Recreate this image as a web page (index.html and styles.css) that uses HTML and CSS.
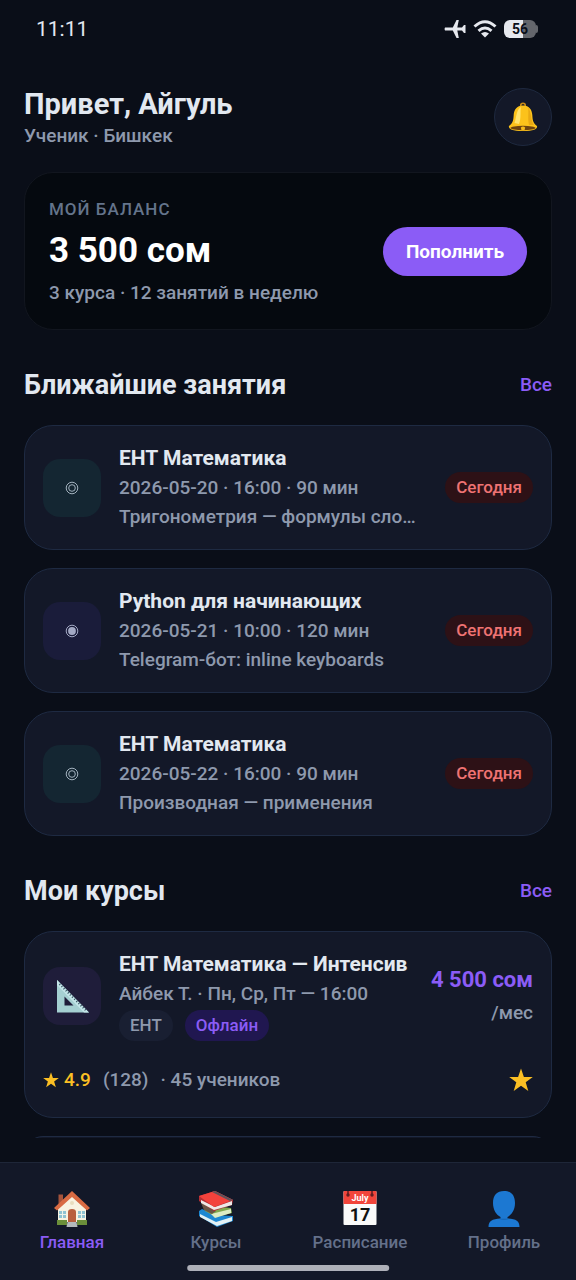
FILE: index.html
```html
<!DOCTYPE html>
<html lang="ru">
<head>
  <meta charset="UTF-8" />
  <meta name="viewport" content="width=device-width, initial-scale=1.0" />
  <title>Главная</title>
  <link rel="stylesheet" href="styles.css">
</head>
<body>
  <div class="status-bar">
    <span class="time">11:11</span>
    <div class="status-icons">
      <svg width="22" height="20" viewBox="0 0 22 20"><path d="M1 8.6Q0 10 1 11.4L8.800 11.600 12.500 19H14.800L13.300 11.600H18L20 14H21.500V6H20L18 8.400H13.300L14.800 1H12.500L8.800 8.400Z" fill="#e6e8ee"/></svg>
      <svg width="24" height="18" viewBox="0 0 24 18"><g fill="none" stroke="#e6e8ee" stroke-width="3"><path d="M1.500 6.500Q12-3 22.500 6.500"/><path d="M5.500 10.800Q12 5.200 18.500 10.800"/></g><path d="M8 13.500Q12 10.500 16 13.500L12 17.500Z" fill="#e6e8ee"/></svg>
      <div class="battery"><span>56</span></div>
    </div>
  </div>

  <main class="content">
    <header class="header">
      <div>
        <h1>Привет, Айгуль</h1>
        <p class="muted">Ученик · Бишкек</p>
      </div>
      <button class="bell-btn" aria-label="Уведомления">
        <svg width="32" height="32" viewBox="0 0 32 32">
          <circle cx="16" cy="4.500" r="2.300" fill="none" stroke="#c98a17" stroke-width="1.600"/>
          <path d="M16 4.500C22.500 4.500 25 9 25.300 14 25.600 20 26.500 22.500 30 25 31 28 26 30 16 30S1 28 2 25C5.500 22.500 6.400 20 6.700 14 7 9 9.500 4.500 16 4.500Z" fill="#fcc21b"/>
          <path d="M14 6C9 9 9.500 17 7.500 22L12 23C14.500 17 13 10 14 6Z" fill="#ffe36c"/>
          <path d="M21 6.500C25 11 23 19 27 24L22 24C20.500 17 22 11 21 6.500Z" fill="#e9a914"/>
          <ellipse cx="16" cy="27" rx="12.500" ry="2.200" fill="#6d4310"/>
          <path d="M13.800 26.500Q16 24.500 18.200 26.500L17.500 29.300H14.500Z" fill="#f5b91a"/>
        </svg>
      </button>
    </header>

    <section class="balance-card">
      <div class="balance-info">
        <p class="balance-label">МОЙ БАЛАНС</p>
        <p class="balance-sum">3 500 сом</p>
        <p class="muted">3 курса · 12 занятий в неделю</p>
      </div>
      <button class="btn-topup">Пополнить</button>
    </section>

    <section>
      <div class="section-head">
        <h2>Ближайшие занятия</h2>
        <a href="#">Все</a>
      </div>
      <div class="card-list">
        <article class="card lesson">
          <div class="card-icon icon-teal">
            <svg width="14" height="14" viewBox="0 0 14 14" fill="none" stroke="#a3b2bf"><circle cx="7" cy="7" r="5.800"/><circle cx="7" cy="7" r="3.300"/></svg>
          </div>
          <div class="card-text">
            <h3>ЕНТ Математика</h3>
            <p>2026-05-20 · 16:00 · 90 мин</p>
            <p>Тригонометрия — формулы сло…</p>
          </div>
          <span class="badge">Сегодня</span>
        </article>
        <article class="card lesson">
          <div class="card-icon icon-indigo">
            <svg width="14" height="14" viewBox="0 0 14 14"><circle cx="7" cy="7" r="5.800" fill="none" stroke="#a3a9c4"/><circle cx="7" cy="7" r="3.900" fill="#a3a9c4"/></svg>
          </div>
          <div class="card-text">
            <h3>Python для начинающих</h3>
            <p>2026-05-21 · 10:00 · 120 мин</p>
            <p>Telegram-бот: inline keyboards</p>
          </div>
          <span class="badge">Сегодня</span>
        </article>
        <article class="card lesson">
          <div class="card-icon icon-teal">
            <svg width="14" height="14" viewBox="0 0 14 14" fill="none" stroke="#a3b2bf"><circle cx="7" cy="7" r="5.800"/><circle cx="7" cy="7" r="3.300"/></svg>
          </div>
          <div class="card-text">
            <h3>ЕНТ Математика</h3>
            <p>2026-05-22 · 16:00 · 90 мин</p>
            <p>Производная — применения</p>
          </div>
          <span class="badge">Сегодня</span>
        </article>
      </div>
    </section>

    <section>
      <div class="section-head">
        <h2>Мои курсы</h2>
        <a href="#">Все</a>
      </div>
      <div class="card-list">
        <article class="card course">
          <div class="course-top">
            <div class="card-icon icon-violet">
              <svg width="36" height="36" viewBox="0 0 36 36">
                <path d="M3 2V34.500H35ZM10.500 18.500L19.500 27.500H10.500Z" fill="#a5d0d2" fill-rule="evenodd"/>
                <path d="M3 2L35 34.500H30L3 7Z" fill="#c3e5e8"/>
                <path d="M5.500 6L32 32.500" stroke="#34515f" stroke-width="2" stroke-dasharray="1 2"/>
              </svg>
            </div>
            <div class="card-text">
              <h3>ЕНТ Математика — Интенсив</h3>
              <p>Айбек Т. · Пн, Ср, Пт — 16:00</p>
              <div class="tags">
                <span class="tag">ЕНТ</span>
                <span class="tag tag-violet">Офлайн</span>
              </div>
            </div>
            <div class="price">
              <strong>4 500 сом</strong>
              <span>/мес</span>
            </div>
          </div>
          <div class="course-bottom">
            <span class="rating">
              <svg width="16" height="16" viewBox="0 0 24 24"><path d="M12 0.500L14.900 9H23.800L16.700 14.300 19.300 23 12 17.800 4.700 23 7.300 14.300 0.200 9H9.100Z" fill="#fbbf24"/></svg>
              4.9
            </span>
            <span>(128)</span>
            <span>· 45 учеников</span>
            <button class="fav-btn" aria-label="Избранное">
              <svg width="24" height="24" viewBox="0 0 24 24"><path d="M12 0.500L14.900 9H23.800L16.700 14.300 19.300 23 12 17.800 4.700 23 7.300 14.300 0.200 9H9.100Z" fill="#fbbf24"/></svg>
            </button>
          </div>
        </article>
        <article class="card course"></article>
      </div>
    </section>
  </main>

  <nav class="tab-bar">
    <a href="#" class="tab active">
      <svg width="36" height="36" viewBox="0 0 36 36">
        <path d="M4.500 3.500H9V14H4.500Z" fill="#a5533b"/>
        <path d="M4 17L18 4 32 17V31H4Z" fill="#f8f3e1"/>
        <path d="M0 17L18 0 36 17 33 19.500 18 6 3 19.500Z" fill="#d96b43"/>
        <path d="M5 20H12V27H5ZM24 20H31V27H24Z" fill="#8fc3d2"/>
        <path d="M8.500 20V27M5 23.500H12M27.500 20V27M24 23.500H31" stroke="#eef3ea"/>
        <path d="M14 33V21Q14 18 18 18T22 21V33Z" fill="#b9603f"/>
        <circle cx="18" cy="12" r="2" fill="#e8ddbd"/>
        <path d="M3 29H13V34H3ZM23 29H33V34H23Z" fill="#6b8f3a"/>
        <path d="M13.500 31H22.500L23.500 36H12.500Z" fill="#b4babd"/>
      </svg>
      <span>Главная</span>
    </a>
    <a href="#" class="tab">
      <svg width="36" height="36" viewBox="0 0 36 36">
        <path d="M1 20L4 18 18 24 35 25V30L19 36 1 25Z" fill="#1e88d2"/>
        <path d="M2 23L18 31 34 26V30L19 35 2 26Z" fill="#e4f1f4"/>
        <path d="M6 16L16 15 33 17 34 22 18 26 7 20Z" fill="#80a84e"/>
        <path d="M13 23L33 18V22L17 27Z" fill="#dcecc4"/>
        <path d="M3 12L12 15 18 20 14 23 6 19Z" fill="#6b5545"/>
        <path d="M1 5L17 0 35 9 34 14 16 20 1 10Z" fill="#b52e34"/>
        <path d="M3 9L17 16 34 10V14L16 19 3 12Z" fill="#eee9e7"/>
        <path d="M1 5L17 0 35 9 16 16Z" fill="#f3423c"/>
        <path d="M17 0L35 9 32 10 14 1Z" fill="#5f5158"/>
      </svg>
      <span>Курсы</span>
    </a>
    <a href="#" class="tab">
      <svg width="36" height="36" viewBox="0 0 36 36">
        <rect x="1.500" y="0" width="33" height="34" rx="1" fill="#fafafa"/>
        <path d="M1.500 1Q1.500 0 2.500 0H33.500Q34.500 0 34.500 1V13H1.500Z" fill="#f2453b"/>
        <path d="M6 0V4M30 0V4" stroke="#611d20" stroke-width="1.500"/>
        <circle cx="6" cy="4" r="1.700" fill="#611d20"/><circle cx="30" cy="4" r="1.700" fill="#611d20"/>
        <text x="18" y="9.500" text-anchor="middle" class="cal-month">July</text>
        <text x="18" y="30" text-anchor="middle" class="cal-day">17</text>
      </svg>
      <span>Расписание</span>
    </a>
    <a href="#" class="tab">
      <svg width="36" height="36" viewBox="0 0 36 36">
        <path d="M18 0C25 0 29 4 29 12 29 19 25.500 24 21.500 26V27.500C30 28 33.500 30 33.500 36H2.500C2.500 30 6 28 14.500 27.500V26C10.500 24 7 19 7 12 7 4 11 0 18 0Z" fill="#1c78d2"/>
        <path d="M12.500 27.700H23.500Q18 30 12.500 27.700Z" fill="#135fb0"/>
      </svg>
      <span>Профиль</span>
    </a>
    <div class="home-indicator"></div>
  </nav>
</body>
</html>
```

FILE: styles.css
```css
* {
  box-sizing: border-box;
}

body {
  margin: 0;
  height: 100vh;
  display: flex;
  flex-direction: column;
  font-family: Roboto, "Noto Sans", sans-serif;
  font-size: 19px;
  line-height: 24px;
  font-weight: 500;
  background-color: #0a0e18;
  color: #e2e8f0;
}

h1, h2, h3, p {
  margin: 0;
}

h1, h2, h3 {
  font-weight: 700;
}

svg {
  display: block;
}

a {
  color: #8b5cf6;
  text-decoration: none;
}

button {
  border: none;
  padding: 0;
  font-family: inherit;
  cursor: pointer;
}

.muted {
  color: #8e99ad;
}

/* status bar */
.status-bar {
  flex: none;
  display: flex;
  justify-content: space-between;
  align-items: center;
  height: 58px;
  padding: 0 38px 0 36px;
}

.time {
  font-size: 21px;
  font-weight: 400;
}

.status-icons {
  display: flex;
  align-items: center;
  gap: 7px;
}

.battery {
  position: relative;
  width: 32px;
  height: 18px;
  margin-right: 2px;
  border-radius: 6px;
  background: linear-gradient(to right, #e6e8ee 60%, #64666c 60%);
  color: #0a0e18;
  font-size: 14px;
  line-height: 18px;
  font-weight: 700;
  text-align: center;
}

.battery::after {
  content: "";
  position: absolute;
  top: 5px;
  right: -2px;
  width: 2px;
  height: 8px;
  border-radius: 0 2px 2px 0;
  background-color: #64666c;
}

/* content */
.content {
  flex: 1;
  min-height: 0;
  overflow: hidden;
  margin-bottom: 24px;
  padding: 28px 24px 0;
}

.header {
  display: flex;
  justify-content: space-between;
  align-items: center;
  margin-bottom: 24px;
}

.header .muted {
  margin-top: 2px;
}

h1 {
  font-size: 29px;
  line-height: 36px;
}

.bell-btn {
  display: flex;
  align-items: center;
  justify-content: center;
  width: 58px;
  height: 58px;
  border: 1px solid #1e293f;
  border-radius: 50%;
  background-color: #131828;
}

.balance-card {
  display: flex;
  justify-content: space-between;
  align-items: center;
  padding: 24px;
  border: 1px solid #12161f;
  border-radius: 29px;
  background-color: #05090f;
}

.balance-info {
  display: flex;
  flex-direction: column;
  gap: 8px;
}

.balance-label {
  font-size: 17px;
  letter-spacing: 1px;
  color: #64748b;
}

.balance-sum {
  font-size: 35px;
  line-height: 44px;
  font-weight: 700;
  color: #fff;
}

.btn-topup {
  height: 49px;
  padding: 0 23px;
  border-radius: 25px;
  background-color: #8b5cf6;
  color: #fff;
  font-size: 19px;
  font-weight: 700;
}

.section-head {
  display: flex;
  justify-content: space-between;
  align-items: center;
  margin: 39px 0 24px;
}

h2 {
  font-size: 27px;
  line-height: 32px;
}

/* cards */
.card-list {
  display: flex;
  flex-direction: column;
  gap: 18px;
}

.card {
  padding: 18px;
  border: 1px solid #1e2a42;
  border-radius: 29px;
  background-color: #131828;
}

.lesson,
.course-top {
  display: flex;
  align-items: center;
  gap: 18px;
}

.card-icon {
  flex: none;
  display: flex;
  align-items: center;
  justify-content: center;
  width: 58px;
  height: 58px;
  border-radius: 17px;
}

.icon-teal {
  background-color: #142632;
}

.icon-indigo {
  background-color: #1a1c3a;
}

.icon-violet {
  background-color: #1f1d3a;
}

.card-text {
  flex: 1;
  min-width: 0;
  color: #8e99ad;
  line-height: 29px;
}

.card-text h3 {
  font-size: 21px;
  color: #e2e8f0;
}

.card-text h3,
.card-text p {
  overflow: hidden;
  white-space: nowrap;
  text-overflow: ellipsis;
}

.badge,
.tag {
  padding: 0 11px;
  border-radius: 16px;
  font-size: 17px;
  line-height: 31px;
}

.badge {
  background-color: #2d1116;
  color: #ef7373;
}

.tags {
  display: flex;
  gap: 12px;
  padding-top: 2px;
}

.tag {
  background-color: #191f32;
}

.tag-violet {
  background-color: #201750;
  color: #8b5cf6;
}

.price {
  display: flex;
  flex-direction: column;
  text-align: right;
  line-height: 33px;
  color: #8e99ad;
}

.price strong {
  font-size: 22px;
  font-weight: 700;
  color: #8b5cf6;
}

.course-bottom {
  display: flex;
  align-items: center;
  gap: 12px;
  min-height: 30px;
  margin: 24px 0 4px;
  color: #8e99ad;
}

.rating {
  display: flex;
  align-items: center;
  gap: 5px;
  color: #fbbf24;
}

.fav-btn {
  margin-left: auto;
  background: none;
}

/* bottom tabs */
.tab-bar {
  flex: none;
  display: flex;
  position: relative;
  height: 118px;
  padding-top: 28px;
  border-top: 1px solid #1e2638;
  background-color: #131828;
}

.tab {
  flex: 1;
  display: flex;
  flex-direction: column;
  align-items: center;
  gap: 3px;
  font-size: 17px;
  color: #64708a;
}

.tab.active {
  color: #8b5cf6;
}

.cal-month {
  font-size: 9px;
  font-weight: 700;
  fill: #fff;
}

.cal-day {
  font-size: 18px;
  font-weight: 700;
  fill: #111;
}

.home-indicator {
  position: absolute;
  left: 50%;
  bottom: 9px;
  width: 35%;
  height: 6px;
  border-radius: 3px;
  background-color: #aeb0b9;
  transform: translateX(-50%);
}
```
